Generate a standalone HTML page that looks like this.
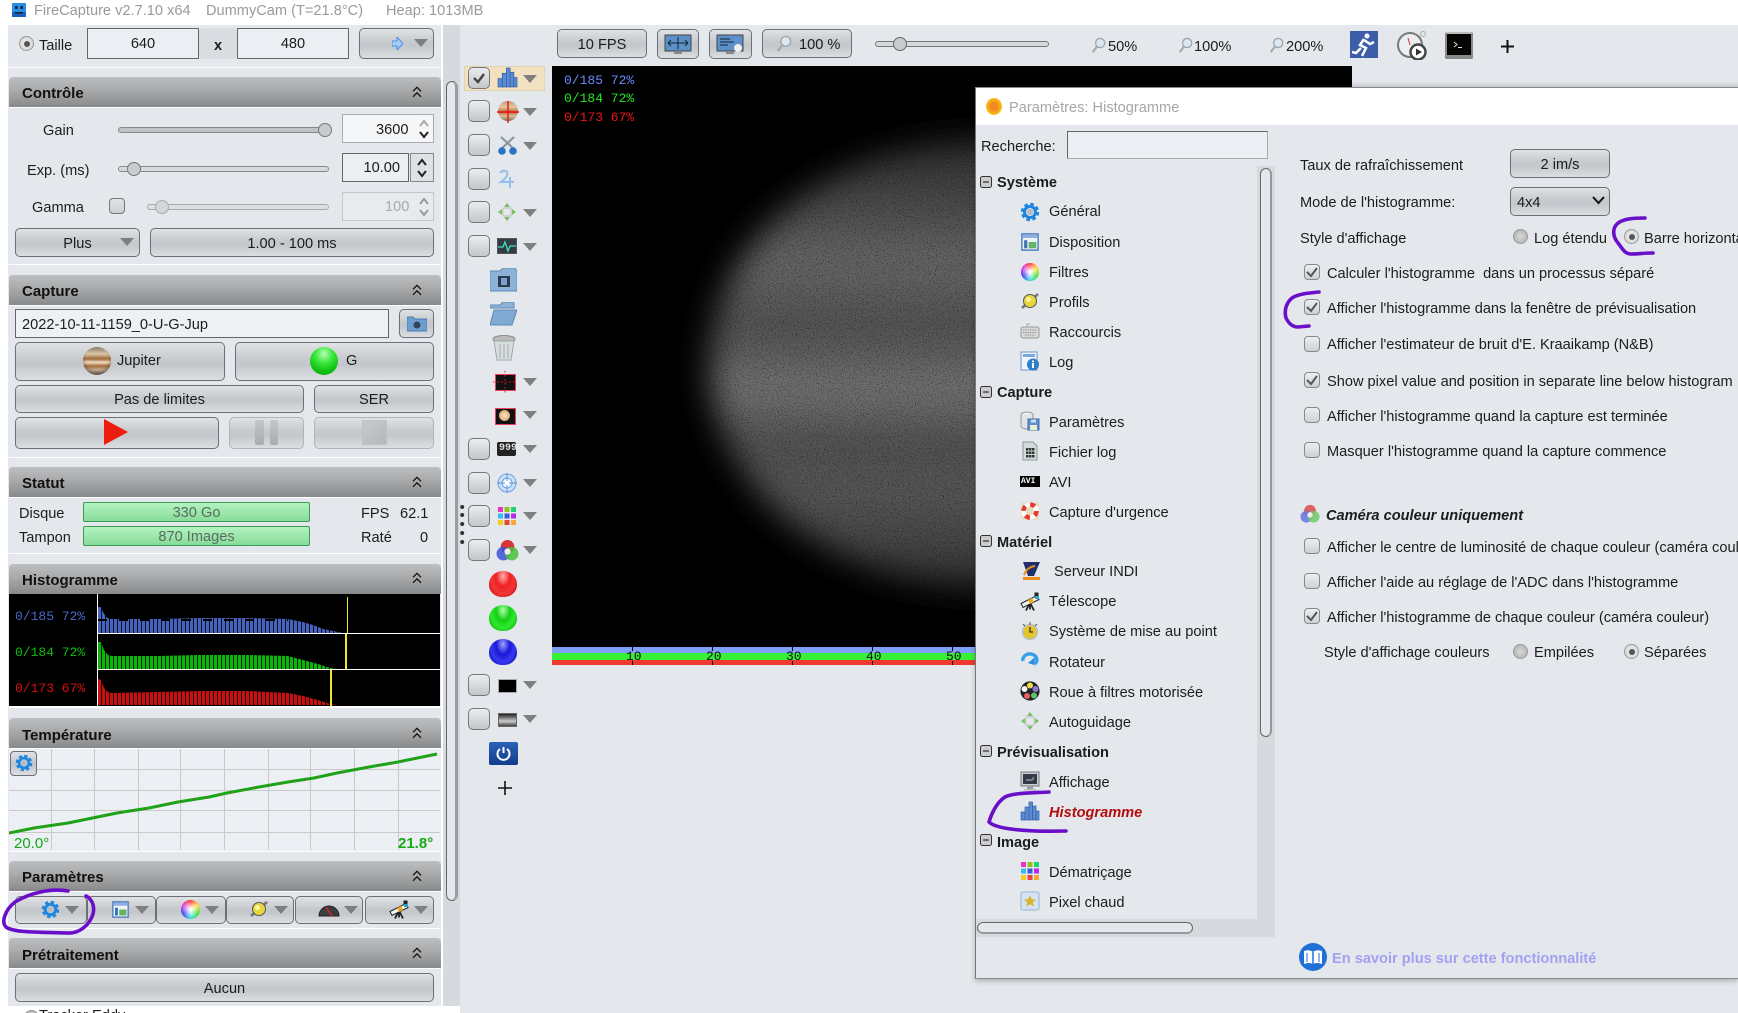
<!DOCTYPE html>
<html lang="fr"><head><meta charset="utf-8"><title>FireCapture</title>
<style>
html,body{margin:0;padding:0;background:#fff}
#p{position:relative;width:1738px;height:1013px;overflow:hidden;background:#fff;font:14.6px/18px "Liberation Sans",sans-serif;color:#1c1c1c}
#p div,#p span,#p svg{position:absolute}
#p span{white-space:nowrap;margin-top:1px}
.b{background:linear-gradient(#e0e2e5,#c6c9cd 45%,#c4c7cb 60%,#dcdfe2);border:1px solid #6c7076;border-radius:5px;box-sizing:border-box;text-align:center;padding-top:2px}
.d{border-color:#b0b4b8}
.i{background:#ebeff3;border:1px solid #666;box-sizing:border-box;text-align:center;padding-top:1px}
.h{left:9px;width:432px;height:30px;background:linear-gradient(#bcbec0,#aaacae 40%,#88898a);border-radius:4px 4px 0 0;border-bottom:1px solid #fff;box-sizing:content-box}
.h b{position:absolute;left:13px;top:8px;font-size:15px;color:#111}
.pn{left:9px;width:432px;background:#e4e8ec;border-bottom:1px solid #fff}
.ar{width:0;height:0;border-left:7px solid transparent;border-right:7px solid transparent;border-top:8px solid #7f7f7f}
.cb{width:22px;height:22px;left:468px;border:1px solid #777;border-radius:5px;background:linear-gradient(#eaecee,#c4c7ca);box-sizing:border-box}
.ck{width:16px;height:16px;left:1304px;border:1px solid #888;border-radius:4px;background:linear-gradient(#eceef0,#ced1d4);box-sizing:border-box}
.r{width:15px;height:15px;border-radius:50%;border:1px solid #999;background:radial-gradient(#d8d8d8,#adadad);box-sizing:border-box}
.r.on{background:radial-gradient(#f0f0f0,#d0d0d0)}
.r.on::after{content:"";position:absolute;left:3.5px;top:3.5px;width:6px;height:6px;border-radius:50%;background:#555}
.wh{border-radius:50%;background:radial-gradient(#fff 5%,transparent 70%),conic-gradient(#f33,#fd3,#3d3,#3dd,#33f,#d3d,#f33)}
.ball{width:28px;height:28px;border-radius:50%}
.gb{background:linear-gradient(#b2f3c0,#86dc99);border:1px solid #3d9a55;border-radius:2px;box-sizing:border-box;text-align:center;color:#5b6b60;height:20px;left:83px;width:227px;padding-top:1px}
.tk{background:linear-gradient(#000 4px,transparent 4px 14px,#000 14px);width:1px;top:647px;height:18px}
.gr{background:#c9c9c9}
.m{font:13px/18px "Liberation Mono",monospace}
</style></head><body><div id="p">

<svg width="0" height="0" style="position:absolute">
<defs>
<symbol id="gear" viewBox="0 0 20 20"><circle cx="10" cy="10" r="7.5" fill="none" stroke="#1c86e2" stroke-width="3.4" stroke-dasharray="3.4 2.5"/><circle cx="10" cy="10" r="5.5" fill="none" stroke="#1c86e2" stroke-width="3"/><circle cx="10" cy="10" r="3.2" fill="#b9bdc2"/></symbol>
<symbol id="lay" viewBox="0 0 20 20"><rect x="1" y="1" width="18" height="18" fill="#eef3fa" stroke="#4d7cc0" stroke-width="1.6"/><rect x="2" y="2" width="16" height="3.5" fill="#8db0e0"/><rect x="3.5" y="8" width="3.5" height="9" fill="#3d70b8"/><rect x="8.5" y="10" width="8.5" height="7" fill="#63b563"/></symbol>
<symbol id="plan" viewBox="0 0 20 20"><path d="M2 17L18 3" stroke="#777" stroke-width="2.6"/><circle cx="10" cy="10" r="6.5" fill="#e6d640" stroke="#555" stroke-width="1"/><circle cx="8.5" cy="8.5" r="2.5" fill="#fdf59a"/></symbol>
<symbol id="tele" viewBox="0 0 20 20"><path d="M10 11L6 19M10 11L14 19M10 11V18" stroke="#222" stroke-width="1.8" fill="none"/><path d="M1 12L17 4L19 8L3 16Z" fill="#f2f2f2" stroke="#222" stroke-width="1"/><path d="M8 8.5L12 6.5L14 10.5L10 12.5Z" fill="#eda91f"/><rect x="14.5" y="1" width="4" height="4" fill="#222"/><rect x="15" y="4.5" width="4" height="3" fill="#2aa5c8"/></symbol>
<symbol id="gauge" viewBox="0 0 22 16"><path d="M1 14A10 10 0 0 1 21 14Z" fill="#3a3d42" stroke="#222"/><path d="M8 5L14 14" stroke="#d22" stroke-width="1.5"/></symbol>
<symbol id="hist" viewBox="0 0 20 20"><g fill="#5c8bd6" stroke="#365f9f" stroke-width=".7"><rect x="1" y="11" width="4" height="8"/><rect x="5" y="6" width="4" height="13"/><rect x="9" y="1" width="3.5" height="18"/><rect x="12.5" y="5" width="3.5" height="14"/><rect x="16" y="10" width="3" height="9"/></g></symbol>
<symbol id="kb" viewBox="0 0 20 20"><rect x="1" y="6" width="18" height="11" rx="2" fill="#d8d8d8" stroke="#999"/><path d="M3 9H17M3 11.5H17M5 14H15" stroke="#999" stroke-dasharray="1.5 .8"/><path d="M7 6V3H10" stroke="#aaa" fill="none"/></symbol>
<symbol id="log" viewBox="0 0 20 20"><rect x="1" y="1" width="16" height="18" fill="#eef4fb" stroke="#6d94c8"/><rect x="3" y="3" width="12" height="3" fill="#7da7dc"/><circle cx="13" cy="13.5" r="6" fill="#2f7fc4"/><rect x="12" y="12" width="2" height="5" fill="#fff"/><rect x="12" y="9.5" width="2" height="1.7" fill="#fff"/></symbol>
<symbol id="par" viewBox="0 0 20 20"><ellipse cx="7" cy="4" rx="6" ry="3" fill="#eee" stroke="#999"/><path d="M1 4V15A6 3 0 0 0 13 15V4" fill="#e4e4e4" stroke="#999"/><rect x="8" y="8" width="11" height="11" fill="#5f8fd0" stroke="#3c6cad"/><rect x="10" y="14" width="7" height="5" fill="#e8f0d0"/><rect x="11" y="8.5" width="5" height="3" fill="#cfe0f5"/></symbol>
<symbol id="fil" viewBox="0 0 20 20"><path d="M3 1H13L17 5V19H3Z" fill="#cfdcd8" stroke="#8a9a9a"/><g fill="#333"><rect x="6" y="7" width="2.5" height="2.5"/><rect x="9" y="7" width="2.5" height="2.5"/><rect x="12" y="7" width="2.5" height="2.5"/><rect x="6" y="10.5" width="2.5" height="2.5"/><rect x="9" y="10.5" width="2.5" height="2.5"/><rect x="12" y="10.5" width="2.5" height="2.5"/><rect x="6" y="14" width="2.5" height="2.5"/><rect x="9" y="14" width="2.5" height="2.5"/><rect x="12" y="14" width="2.5" height="2.5"/></g></symbol>
<symbol id="buoy" viewBox="0 0 20 20"><rect x="1" y="1" width="18" height="18" rx="3" fill="#e6dcc0"/><circle cx="10" cy="10" r="6.5" fill="none" stroke="#fff" stroke-width="4.5"/><circle cx="10" cy="10" r="6.5" fill="none" stroke="#e43a35" stroke-width="4.5" stroke-dasharray="5 5.2"/></symbol>
<symbol id="indi" viewBox="0 0 20 20"><path d="M2 1H19L13 15H7Z" fill="#1f2f6e"/><path d="M3 14Q6 6 14 5" stroke="#ee8e16" stroke-width="2" fill="none"/><rect x="2" y="16" width="17" height="3" fill="#ee8e16"/></symbol>
<symbol id="foc" viewBox="0 0 20 20"><circle cx="10" cy="11" r="7.5" fill="#e5c52c" stroke="#b5c2d3" stroke-width="1.5"/><path d="M10 6V11H13" stroke="#333" fill="none" stroke-width="1.3"/><path d="M10 1V4M3 3L5 5M17 3L15 5" stroke="#555"/></symbol>
<symbol id="rot" viewBox="0 0 20 20"><path d="M3 10A7 6 0 1 1 15 13" fill="none" stroke="#36a0ea" stroke-width="3.4"/><path d="M15 6L8 12L14 14L14 19Z" fill="#2a8fdc"/></symbol>
<symbol id="rou" viewBox="0 0 20 20"><circle cx="10" cy="10" r="9.6" fill="#222"/><circle cx="10" cy="4.5" r="3" fill="#e9db4c"/><circle cx="15.5" cy="8" r="3" fill="#8a7ad0"/><circle cx="14" cy="14.5" r="3" fill="#5ec46a"/><circle cx="7" cy="15" r="3" fill="#e9616a"/><circle cx="4.5" cy="8" r="3" fill="#f4f4f4"/></symbol>
<symbol id="auto" viewBox="0 0 20 20"><rect x="6" y="6" width="8" height="8" fill="#e8eaea" stroke="#bbb"/><g fill="#78c060"><path d="M10 1L13 5H7Z"/><path d="M10 19L13 15H7Z"/><path d="M1 10L5 7V13Z"/><path d="M19 10L15 7V13Z"/></g></symbol>
<symbol id="mon" viewBox="0 0 20 20"><rect x="1" y="1" width="18" height="14" fill="#c9ced4" stroke="#777"/><rect x="3" y="3" width="14" height="10" fill="#353a48"/><path d="M6 9H12Q14 8 13 6" stroke="#bbb" fill="none"/><rect x="7" y="15" width="6" height="3" fill="#9a9ea4"/><rect x="4" y="18" width="12" height="1.5" fill="#bbb"/></symbol>
<symbol id="dem" viewBox="0 0 20 20"><g><rect x="1" y="1" width="5" height="5" fill="#e934c8"/><rect x="7.5" y="1" width="5" height="5" fill="#8dc418"/><rect x="14" y="1" width="5" height="5" fill="#1dd272"/><rect x="1" y="7.5" width="5" height="5" fill="#38bdf2"/><rect x="7.5" y="7.5" width="5" height="5" fill="#3a5ae0"/><rect x="14" y="7.5" width="5" height="5" fill="#b52be8"/><rect x="1" y="14" width="5" height="5" fill="#f2cf25"/><rect x="7.5" y="14" width="5" height="5" fill="#e6483a"/><rect x="14" y="14" width="5" height="5" fill="#f7a93a"/></g></symbol>
<symbol id="star" viewBox="0 0 20 20"><rect x="1" y="1" width="18" height="18" rx="2" fill="#d4e4f4" stroke="#9ab5d2"/><path d="M10 4L11.8 8.3L16.2 8.5L12.8 11.3L14 15.8L10 13.3L6 15.8L7.2 11.3L3.8 8.5L8.2 8.3Z" fill="#d8b52e"/></symbol>
<symbol id="chev" viewBox="0 0 10 12"><path d="M1 5.3L5 1.3L9 5.3M1 10.8L5 6.8L9 10.8" fill="none" stroke="#111" stroke-width="1.3"/></symbol>
<symbol id="mag" viewBox="0 0 18 20"><circle cx="11" cy="7" r="5.5" fill="#dbe8f2" stroke="#a0a5aa" stroke-width="1.6"/><path d="M7 11.5L2 18" stroke="#a8a8a8" stroke-width="2.6"/></symbol>
<symbol id="rgb" viewBox="0 0 22 22"><circle cx="11" cy="7.5" r="6.5" fill="#d83636"/><circle cx="7" cy="14" r="6.5" fill="#3d4fd8" fill-opacity=".85"/><circle cx="15" cy="14" r="6.5" fill="#4cc03d" fill-opacity=".85"/><circle cx="11" cy="12" r="3" fill="#eee"/></symbol>
</defs></svg>

<!-- title bar -->
<svg style="left:12px;top:3px" width="14" height="14" viewBox="0 0 14 14"><rect width="14" height="14" fill="#2a8fe0"/><rect y="9" width="14" height="5" fill="#1e5fbe"/><rect x="3" y="3" width="2.5" height="3" fill="#124"/><rect x="8.5" y="3" width="2.5" height="3" fill="#124"/><rect x="3" y="9" width="8" height="1.6" fill="#124"/></svg>
<span style="left:34px;top:1px;color:#9a9a9a">FireCapture v2.7.10 x64</span>
<span style="left:206px;top:1px;color:#9a9a9a">DummyCam (T=21.8°C)</span>
<span style="left:386px;top:1px;color:#9a9a9a">Heap: 1013MB</span>

<!-- main backgrounds -->
<div style="left:460px;top:25px;width:1278px;height:988px;background:#e4e8ec"></div>
<div style="left:8px;top:25px;width:452px;height:981px;background:#e4e8ec"></div>
<div style="left:443px;top:25px;width:17px;height:981px;background:#d6dade"></div>
<div style="left:446px;top:81px;width:12px;height:820px;border:1px solid #666;border-radius:6px;box-sizing:border-box;background:#e4e8ec;border-right:3px solid #9a9ea4"></div>
<div style="left:441px;top:25px;width:2px;height:981px;background:#fff"></div>

<!-- Taille -->
<div style="left:8px;top:25px;width:433px;height:42px;border-bottom:1px solid #fff"></div>
<div class="r on" style="left:19px;top:36px"></div>
<span style="left:39px;top:36px">Taille</span>
<div class="i" style="left:87px;top:28px;width:112px;height:31px;line-height:29px">640</div>
<div style="left:199px;top:28px;width:38px;height:31px;background:#d9dce0;border-radius:4px"></div>
<span style="left:214px;top:36px;font-weight:bold">x</span>
<div class="i" style="left:237px;top:28px;width:112px;height:31px;line-height:29px">480</div>
<div class="b" style="left:359px;top:28px;width:75px;height:31px"></div>
<svg style="left:392px;top:37px" width="11" height="13" viewBox="0 0 11 13"><path d="M0 4H5V0L11 6.5L5 13V9H0Z" fill="#a8cdf5" stroke="#4b8fde"/></svg>
<div class="ar" style="left:414px;top:39px"></div>

<!-- Contrôle -->
<div class="h" style="top:77px"><b>Contrôle</b></div><svg style="left:412px;top:86px" width="10" height="12"><use href="#chev"/></svg>
<div class="pn" style="top:108px;height:156px"></div>
<span style="left:43px;top:121px">Gain</span>
<div style="left:118px;top:127px;width:213px;height:6px;background:#bfc3c7;border:1px solid #888;border-radius:3px;box-sizing:border-box"></div>
<div style="left:318px;top:123px;width:14px;height:14px;border-radius:50%;background:#c8ccd0;border:1px solid #777;box-sizing:border-box"></div>
<div style="left:342px;top:114px;width:92px;height:29px;background:#f4f6f8;border:1px solid #aaa;box-sizing:border-box"></div>
<span style="left:376px;top:120px">3600</span>
<svg style="left:418px;top:118px" width="12" height="22" viewBox="0 0 12 22"><path d="M2 8L6 3L10 8" stroke="#aaa" stroke-width="2" fill="none"/><path d="M2 14L6 19L10 14" stroke="#222" stroke-width="2" fill="none"/></svg>

<span style="left:27px;top:161px">Exp. (ms)</span>
<div style="left:118px;top:166px;width:211px;height:6px;background:#d6d9dc;border:1px solid #888;border-radius:3px;box-sizing:border-box"></div>
<div style="left:127px;top:162px;width:14px;height:14px;border-radius:50%;background:#c8ccd0;border:1px solid #777;box-sizing:border-box"></div>
<div class="i" style="left:342px;top:153px;width:67px;height:29px;text-align:right;padding-right:8px;line-height:27px">10.00</div>
<div style="left:410px;top:153px;width:24px;height:29px;background:#dfe2e5;border:1px solid #888;box-sizing:border-box"></div>
<svg style="left:416px;top:157px" width="12" height="22" viewBox="0 0 12 22"><path d="M2 8L6 3L10 8M2 14L6 19L10 14" stroke="#222" stroke-width="2" fill="none"/></svg>

<span style="left:32px;top:198px">Gamma</span>
<div style="left:109px;top:198px;width:16px;height:16px;border:1px solid #777;border-radius:4px;background:linear-gradient(#e2e4e6,#ccd0d3);box-sizing:border-box"></div>
<div style="left:147px;top:204px;width:182px;height:6px;background:#dde0e3;border:1px solid #aaa;border-radius:3px;box-sizing:border-box"></div>
<div style="left:155px;top:200px;width:14px;height:14px;border-radius:50%;background:#d4d7da;border:1px solid #aaa;box-sizing:border-box"></div>
<div style="left:342px;top:192px;width:92px;height:29px;background:#e8ebee;border:1px solid #c4c7ca;box-sizing:border-box"></div>
<span style="left:385px;top:197px;color:#aaa">100</span>
<svg style="left:418px;top:196px" width="12" height="22" viewBox="0 0 12 22"><path d="M2 8L6 3L10 8M2 14L6 19L10 14" stroke="#999" stroke-width="2" fill="none"/></svg>

<div class="b" style="left:15px;top:228px;width:125px;height:29px;line-height:27px">Plus</div>
<div class="ar" style="left:120px;top:238px"></div>
<div class="b" style="left:150px;top:228px;width:284px;height:29px;line-height:27px">1.00 - 100 ms</div>

<!-- Capture -->
<div class="h" style="top:275px"><b>Capture</b></div><svg style="left:412px;top:284px" width="10" height="12"><use href="#chev"/></svg>
<div class="pn" style="top:306px;height:151px"></div>
<div class="i" style="left:15px;top:309px;width:374px;height:29px;text-align:left;padding:2px 0 0 6px;line-height:27px;background:#eef1f4">2022-10-11-1159_0-U-G-Jup</div>
<div class="b" style="left:399px;top:309px;width:35px;height:29px"></div>
<svg style="left:407px;top:314px" width="20" height="18" viewBox="0 0 20 18"><path d="M0 3H6L8 5H20V17H0Z" fill="#6c9ed0" stroke="#4a7db0"/><circle cx="10" cy="11" r="3.5" fill="#345" /></svg>

<div class="b" style="left:15px;top:342px;width:210px;height:39px"></div>
<div class="ball" style="left:83px;top:347px;background:radial-gradient(circle at 50% 40%,transparent 50%,rgba(60,40,30,.8) 100%),linear-gradient(#8a7a68,#dcc6a6 25%,#a06a3a 42%,#f0dcc0 55%,#a56c3c 68%,#c7b49c 82%,#6f6254)"></div>
<span style="left:117px;top:351px">Jupiter</span>
<div class="b" style="left:235px;top:342px;width:199px;height:39px"></div>
<div class="ball" style="left:310px;top:347px;background:radial-gradient(circle at 50% 25%,#b8ffb8 0,#3ce83c 35%,#0fc00f 70%,#0a9a0a)"></div>
<span style="left:346px;top:351px">G</span>

<div class="b" style="left:15px;top:385px;width:289px;height:28px;line-height:26px;padding-top:1px">Pas de limites</div>
<div class="b" style="left:314px;top:385px;width:120px;height:28px;line-height:26px;padding-top:1px">SER</div>

<div class="b" style="left:15px;top:417px;width:204px;height:32px"></div>
<svg style="left:104px;top:419px" width="24" height="26"><path d="M0 0L24 13L0 26Z" fill="#ee1c0e"/></svg>
<div class="b d" style="left:229px;top:417px;width:75px;height:32px"></div>
<div style="left:255px;top:420px;width:9px;height:25px;background:linear-gradient(#c2c5c9,#a9acb0);border-radius:2px"></div>
<div style="left:270px;top:420px;width:8px;height:25px;background:linear-gradient(#c2c5c9,#a9acb0);border-radius:2px"></div>
<div class="b d" style="left:314px;top:417px;width:120px;height:32px"></div>
<div style="left:362px;top:420px;width:25px;height:25px;background:linear-gradient(135deg,#c8cbce,#b4b7bb);border:1px solid #c0c3c6;box-sizing:border-box"></div>

<!-- Statut -->
<div class="h" style="top:467px"><b>Statut</b></div><svg style="left:412px;top:476px" width="10" height="12"><use href="#chev"/></svg>
<div class="pn" style="top:498px;height:55px"></div>
<span style="left:19px;top:504px">Disque</span>
<div class="gb" style="top:502px;line-height:18px">330 Go</div>
<span style="left:19px;top:528px">Tampon</span>
<div class="gb" style="top:526px;line-height:19px">870 Images</div>
<span style="left:361px;top:504px">FPS</span><span style="left:400px;top:504px">62.1</span>
<span style="left:361px;top:528px">Raté</span><span style="left:420px;top:528px">0</span>

<!-- Histogramme -->
<div class="h" style="top:564px"><b>Histogramme</b></div><svg style="left:412px;top:572px" width="10" height="12"><use href="#chev"/></svg>
<div style="left:9px;top:594px;width:431px;height:112px;background:#000"></div>
<div style="left:9px;top:706px;width:432px;height:2px;background:#fff"></div>
<div style="left:97px;top:594px;width:1px;height:112px;background:#fff"></div>
<div style="left:98px;top:633px;width:342px;height:1px;background:#fff"></div>
<div style="left:98px;top:669px;width:342px;height:1px;background:#fff"></div>
<span class="m" style="left:15px;top:607px;color:#4a67c8">0/185 72%</span>
<span class="m" style="left:15px;top:643px;color:#0cc00c">0/184 72%</span>
<span class="m" style="left:15px;top:679px;color:#d81010">0/173 67%</span>
<div style="left:98px;top:597px;width:245px;height:36px;background:repeating-linear-gradient(90deg,#4664bd 0 3px,#0a0f24 3px 4px);clip-path:polygon(0 36px,0 10px,3px 10px,5px 15px,8px 20px,12px 22px,60px 22px,100px 21px,150px 21px,190px 22px,205px 25px,215px 28px,225px 32px,240px 35px,245px 36px)"></div>
<div style="left:98px;top:619px;width:190px;height:2px;background:repeating-linear-gradient(90deg,#000 0 9px,transparent 9px 21px)"></div>
<div style="left:98px;top:634px;width:245px;height:35px;background:repeating-linear-gradient(90deg,#0cb40c 0 3px,#022002 3px 4px);clip-path:polygon(0 35px,0 8px,3px 8px,6px 16px,10px 21px,14px 22px,60px 22px,100px 21px,150px 21px,190px 22px,205px 26px,220px 30px,232px 34px,240px 35px)"></div>
<div style="left:98px;top:670px;width:245px;height:35px;background:repeating-linear-gradient(90deg,#c81010 0 3px,#200202 3px 4px);clip-path:polygon(0 35px,0 9px,3px 10px,6px 18px,10px 22px,14px 23px,60px 22px,100px 21px,150px 21px,190px 23px,205px 26px,220px 30px,232px 34px,240px 35px)"></div>
<div style="left:347px;top:597px;width:1px;height:36px;background:#f0e820"></div>
<div style="left:345px;top:634px;width:2px;height:35px;background:#f0e820"></div>
<div style="left:330px;top:670px;width:2px;height:36px;background:#f0e820"></div>

<!-- Température -->
<div class="h" style="top:718px"><b style="top:9px">Température</b></div><svg style="left:412px;top:727px" width="10" height="12"><use href="#chev"/></svg>
<div class="pn" style="top:749px;height:102px;background:#ecf0f4"></div>
<div class="gr" style="left:51px;top:749px;width:1px;height:101px"></div><div class="gr" style="left:94px;top:749px;width:1px;height:101px"></div><div class="gr" style="left:138px;top:749px;width:1px;height:101px"></div><div class="gr" style="left:180px;top:749px;width:1px;height:101px"></div><div class="gr" style="left:224px;top:749px;width:1px;height:101px"></div><div class="gr" style="left:268px;top:749px;width:1px;height:101px"></div><div class="gr" style="left:310px;top:749px;width:1px;height:101px"></div><div class="gr" style="left:354px;top:749px;width:1px;height:101px"></div><div class="gr" style="left:398px;top:749px;width:1px;height:101px"></div>
<div class="gr" style="left:9px;top:769px;width:431px;height:1px"></div><div class="gr" style="left:9px;top:790px;width:431px;height:1px"></div><div class="gr" style="left:9px;top:810px;width:431px;height:1px"></div><div class="gr" style="left:9px;top:832px;width:431px;height:1px"></div>
<svg style="left:9px;top:749px" width="432" height="90"><path d="M0 84L25 79L59 74L108 64L140 59L169 53L200 48L218 44L250 38L279 33L305 29L328 24L360 18L389 13L428 5" fill="none" stroke="#16a816" stroke-width="3"/><path d="M0 84L25 79L59 74L108 64L140 59L169 53L200 48L218 44L250 38L279 33L305 29L328 24L360 18L389 13L428 5" fill="none" stroke="#8a5a2a" stroke-width="2" stroke-dasharray="1.5 11"/></svg>
<div class="b" style="left:10px;top:751px;width:27px;height:25px;border-radius:4px"></div>
<svg style="left:15px;top:754px" width="18" height="18"><use href="#gear"/></svg>
<span style="left:14px;top:834px;color:#16a816;font-size:15px">20.0°</span>
<span style="left:398px;top:834px;color:#16a816;font-size:15px;font-weight:bold">21.8°</span>

<!-- Paramètres -->
<div class="h" style="top:861px"><b>Paramètres</b></div><svg style="left:412px;top:870px" width="10" height="12"><use href="#chev"/></svg>
<div class="pn" style="top:892px;height:36px"></div>
<div class="b" style="left:15px;top:896px;width:72px;height:28px"></div>
<div class="b" style="left:87px;top:896px;width:69px;height:28px"></div>
<div class="b" style="left:156px;top:896px;width:70px;height:28px"></div>
<div class="b" style="left:226px;top:896px;width:68px;height:28px"></div>
<div class="b" style="left:295px;top:896px;width:68px;height:28px"></div>
<div class="b" style="left:365px;top:896px;width:69px;height:28px"></div>
<svg style="left:41px;top:900px" width="19" height="19"><use href="#gear"/></svg><div class="ar" style="left:65px;top:906px"></div>
<svg style="left:111px;top:901px" width="19" height="17"><use href="#lay"/></svg><div class="ar" style="left:135px;top:906px"></div>
<div class="wh" style="left:181px;top:900px;width:19px;height:19px"></div><div class="ar" style="left:205px;top:906px"></div>
<svg style="left:249px;top:899px" width="20" height="20"><use href="#plan"/></svg><div class="ar" style="left:274px;top:906px"></div>
<svg style="left:318px;top:902px" width="22" height="16"><use href="#gauge"/></svg><div class="ar" style="left:344px;top:906px"></div>
<svg style="left:389px;top:899px" width="20" height="21"><use href="#tele"/></svg><div class="ar" style="left:414px;top:906px"></div>

<!-- Prétraitement -->
<div class="h" style="top:938px"><b style="top:9px">Prétraitement</b></div><svg style="left:412px;top:947px" width="10" height="12"><use href="#chev"/></svg>
<div class="pn" style="top:969px;height:37px"></div>
<div class="b" style="left:15px;top:973px;width:419px;height:29px;line-height:27px">Aucun</div>
<div style="left:0;top:1006px;width:460px;height:7px;background:#fff"></div>
<div class="r" style="left:24px;top:1010px"></div>
<span style="left:39px;top:1006px">Tracker Eddy</span>

<!-- Toolbar -->
<div class="b" style="left:557px;top:29px;width:90px;height:29px;line-height:27px">10 FPS</div>
<div class="b" style="left:657px;top:29px;width:42px;height:30px"></div>
<svg style="left:664px;top:34px" width="28" height="21" viewBox="0 0 28 21"><rect x="1" y="1" width="26" height="16" fill="#5d90c8" stroke="#444"/><path d="M4 9H24M14 3V15M4 9l3-3M4 9l3 3M24 9l-3-3M24 9l-3 3" stroke="#123" fill="none"/><rect x="10" y="17" width="8" height="3" fill="#888"/></svg>
<div class="b" style="left:709px;top:29px;width:43px;height:30px"></div>
<svg style="left:716px;top:34px" width="28" height="21" viewBox="0 0 28 21"><rect x="1" y="1" width="26" height="16" fill="#5d90c8" stroke="#444"/><path d="M4 5H14M4 8H18M4 11H12" stroke="#123"/><circle cx="22" cy="14" r="4" fill="#eee"/><rect x="10" y="17" width="8" height="3" fill="#888"/></svg>
<div class="b" style="left:762px;top:29px;width:90px;height:29px"></div>
<svg style="left:776px;top:35px" width="16" height="18"><use href="#mag"/></svg>
<span style="left:799px;top:35px">100 %</span>
<div style="left:875px;top:41px;width:174px;height:6px;background:#d6d9dc;border:1px solid #777;border-radius:3px;box-sizing:border-box"></div>
<div style="left:893px;top:37px;width:14px;height:14px;border-radius:50%;background:#c8ccd0;border:1px solid #666;box-sizing:border-box"></div>
<svg style="left:1091px;top:37px" width="15" height="17"><use href="#mag"/></svg><span style="left:1108px;top:37px">50%</span>
<svg style="left:1178px;top:37px" width="15" height="17"><use href="#mag"/></svg><span style="left:1194px;top:37px">100%</span>
<svg style="left:1269px;top:37px" width="15" height="17"><use href="#mag"/></svg><span style="left:1286px;top:37px">200%</span>
<svg style="left:1350px;top:31px" width="28" height="27" viewBox="0 0 28 27"><rect width="28" height="27" fill="#3c5ea8"/><circle cx="17" cy="5" r="2.5" fill="#fff"/><path d="M14 8L10 14L16 17L12 25M14 9L20 13L24 11M11 17L6 22L2 21" stroke="#fff" stroke-width="2.5" fill="none"/></svg>
<svg style="left:1397px;top:30px" width="30" height="30" viewBox="0 0 30 30"><circle cx="13" cy="15" r="12" fill="#eceff0" stroke="#777" stroke-width="2"/><path d="M13 15L11 8" stroke="#c33"/><circle cx="21" cy="22" r="7.5" fill="#fff" stroke="#444" stroke-width="2.5"/><path d="M19 18.5L25 22L19 25.5Z" fill="#333"/><circle cx="26" cy="4" r="2.5" fill="none" stroke="#aaa"/></svg>
<div style="left:1445px;top:32px;width:28px;height:27px;background:#050505;border:2px solid #888;border-top-color:#bbb;border-bottom-width:4px;box-sizing:border-box;border-radius:2px"></div>
<svg style="left:1453px;top:41px" width="10" height="8"><path d="M1 1L4 3.5L1 6M5 6.5H9" stroke="#ddd" fill="none"/></svg>
<svg style="left:1501px;top:40px" width="13" height="13"><path d="M6.5 0V13M0 6.5H13" stroke="#111" stroke-width="2"/></svg>

<!-- left vertical toolbar -->
<div style="left:464px;top:66px;width:81px;height:25px;background:#f2e2bf;border:1px solid #e2d4b3;box-sizing:border-box"></div>
<div class="cb" style="top:67px"></div>
<svg style="left:472px;top:71px" width="14" height="14" viewBox="0 0 14 14"><path d="M2 7L6 11L12 3" stroke="#444" stroke-width="2.4" fill="none"/></svg>
<svg style="left:497px;top:67px" width="21" height="21"><use href="#hist"/></svg>
<div class="ar" style="left:523px;top:75px"></div>

<div class="cb" style="top:100px"></div>
<div style="left:498px;top:101px;width:20px;height:20px;border-radius:50%;background:linear-gradient(#b89a80,#e8c8a0 30%,#b06a3a 55%,#ddc0a0 75%,#7a6a58)"></div>
<svg style="left:497px;top:101px" width="22" height="22"><path d="M0 11H22M11 0V22" stroke="#f01010" stroke-width="1.4"/></svg>
<div class="ar" style="left:523px;top:108px"></div>

<div class="cb" style="top:134px"></div>
<svg style="left:497px;top:135px" width="21" height="21" viewBox="0 0 21 21"><path d="M4 2L17 14M17 2L4 14" stroke="#8a97a3" stroke-width="2.2"/><circle cx="5" cy="16" r="3.8" fill="#2a72c6"/><circle cx="16" cy="16" r="3.8" fill="#2a72c6"/></svg>
<div class="ar" style="left:523px;top:142px"></div>

<div class="cb" style="top:168px"></div>
<svg style="left:498px;top:169px" width="18" height="20" viewBox="0 0 18 20"><path d="M2 4Q6 0 9 3Q11 7 3 13H16M12 8V19" fill="none" stroke="#93c0ee" stroke-width="2"/></svg>

<div class="cb" style="top:201px"></div>
<svg style="left:497px;top:202px" width="20" height="20"><use href="#auto"/></svg>
<div class="ar" style="left:523px;top:209px"></div>

<div class="cb" style="top:235px"></div>
<div style="left:497px;top:238px;width:20px;height:16px;background:#333c44;border:1px solid #555;box-sizing:border-box"></div>
<svg style="left:497px;top:238px" width="20" height="16"><path d="M1 9H6L8 4L11 13L13 8H19" stroke="#3fe0c0" fill="none" stroke-width="1.3"/></svg>
<div class="ar" style="left:523px;top:243px"></div>

<svg style="left:490px;top:268px" width="27" height="24" viewBox="0 0 27 24"><path d="M0 3H10L13 0H25L27 3V23H0Z" fill="#8db2d8" stroke="#5f8ab5"/><rect x="8" y="8" width="12" height="11" fill="#2b3a48"/><rect x="11" y="10" width="6" height="7" fill="#7c9fd6"/></svg>
<svg style="left:490px;top:302px" width="27" height="24" viewBox="0 0 27 24"><path d="M0 3H10L13 0H24V6H0Z" fill="#8db2d8" stroke="#5f8ab5"/><path d="M4 8H27L22 23H0Z" fill="#80aad2" stroke="#5f8ab5"/></svg>
<svg style="left:492px;top:335px" width="24" height="26" viewBox="0 0 24 26"><ellipse cx="12" cy="4" rx="11" ry="3.5" fill="#bbb" stroke="#888"/><path d="M2 6L5 25H19L22 6Z" fill="#d9dde0" stroke="#9aa"/><path d="M8 9V23M12 9V23M16 9V23" stroke="#a4a9ae"/></svg>
<div style="left:495px;top:374px;width:19px;height:15px;background:#111;border:1px solid #f04060;box-sizing:content-box"></div>
<svg style="left:493px;top:371px" width="24" height="23"><path d="M12 0V23M0 11H24" stroke="#f01a1a" stroke-dasharray="1.5 2.5"/></svg>
<div class="ar" style="left:523px;top:378px"></div>
<div style="left:495px;top:408px;width:19px;height:15px;background:#111;border:1px solid #f04060;box-sizing:content-box"></div>
<div style="left:499px;top:410px;width:11px;height:11px;border-radius:50%;background:radial-gradient(#fbe9c8,#d08a55)"></div>
<div class="ar" style="left:523px;top:411px"></div>

<div class="cb" style="top:438px"></div>
<div style="left:497px;top:442px;width:19px;height:14px;background:#222;border-radius:2px"></div>
<span style="left:499px;top:440px;font:bold 10px/16px 'Liberation Mono',monospace;color:#ddd">999</span>
<div class="ar" style="left:523px;top:445px"></div>

<div class="cb" style="top:472px"></div>
<svg style="left:497px;top:473px" width="20" height="20" viewBox="0 0 20 20"><circle cx="10" cy="10" r="9" fill="#cfe0f6" stroke="#6da0e0"/><circle cx="10" cy="10" r="5" fill="#eef5ff" stroke="#6da0e0"/><path d="M10 0V20M0 10H20" stroke="#5a90d8"/><circle cx="10" cy="10" r="2.2" fill="#fff"/></svg>
<div class="ar" style="left:523px;top:479px"></div>

<div class="cb" style="top:505px"></div>
<svg style="left:497px;top:506px" width="20" height="20"><use href="#dem"/></svg>
<div class="ar" style="left:523px;top:512px"></div>

<div class="cb" style="top:539px"></div>
<svg style="left:496px;top:539px" width="23" height="23"><use href="#rgb"/></svg>
<div class="ar" style="left:523px;top:546px"></div>

<div class="ball" style="left:489px;top:571px;height:26px;background:radial-gradient(ellipse at 50% 20%,#ffb0b0 0,#f02020 35%,#f03838 60%,#c00000 100%);border-radius:50% 50% 46% 46%"></div>
<div class="ball" style="left:489px;top:605px;height:26px;background:radial-gradient(ellipse at 50% 20%,#b0ffb0 0,#14d014 35%,#30e830 60%,#00a000 100%);border-radius:50% 50% 46% 46%"></div>
<div class="ball" style="left:489px;top:639px;height:26px;background:radial-gradient(ellipse at 50% 20%,#a0a0ff 0,#1818d8 35%,#3838f0 60%,#0000a8 100%);border-radius:50% 50% 46% 46%"></div>

<div class="cb" style="top:674px"></div>
<div style="left:498px;top:679px;width:17px;height:12px;background:#000;border:1px solid #aaa"></div>
<div class="ar" style="left:523px;top:681px"></div>
<div class="cb" style="top:708px"></div>
<div style="left:498px;top:713px;width:17px;height:12px;background:linear-gradient(#222,#ccc 60%,#444);border:1px solid #666"></div>
<div class="ar" style="left:523px;top:715px"></div>

<div style="left:489px;top:742px;width:29px;height:23px;background:linear-gradient(#2b62b8,#123c8c);border-radius:2px"></div>
<svg style="left:496px;top:746px" width="15" height="15" viewBox="0 0 15 15"><path d="M4 3A6 6 0 1 0 11 3M7.5 1V7" stroke="#fff" stroke-width="2" fill="none"/></svg>
<svg style="left:498px;top:781px" width="14" height="14"><path d="M7 0V14M0 7H14" stroke="#111" stroke-width="1.6"/></svg>

<svg style="left:460px;top:505px" width="5" height="42"><circle cx="2.2" cy="2" r="2" fill="#333"/><circle cx="2.2" cy="10" r="2" fill="#333"/><circle cx="2.2" cy="19" r="2" fill="#333"/><circle cx="2.2" cy="28" r="2" fill="#333"/><circle cx="2.2" cy="37" r="2" fill="#333"/></svg>

<!-- Preview -->
<div style="left:552px;top:66px;width:800px;height:581px;background:#000"></div>
<svg style="left:552px;top:66px" width="423" height="581" viewBox="552 66 423 581">
<defs>
<linearGradient id="band" gradientUnits="userSpaceOnUse" x1="0" y1="129" x2="0" y2="599">
<stop offset="0" stop-color="#282828"/><stop offset=".15" stop-color="#484848"/><stop offset=".29" stop-color="#6a6a6a"/><stop offset=".39" stop-color="#555"/><stop offset=".47" stop-color="#585858"/><stop offset=".53" stop-color="#747474"/><stop offset=".58" stop-color="#6e6e6e"/><stop offset=".66" stop-color="#505050"/><stop offset=".78" stop-color="#585858"/><stop offset=".9" stop-color="#424242"/><stop offset="1" stop-color="#242424"/>
</linearGradient>
<filter id="bl" x="-20%" y="-20%" width="140%" height="140%"><feGaussianBlur stdDeviation="16"/></filter>
<filter id="nz" x="0" y="0" width="100%" height="100%"><feTurbulence type="fractalNoise" baseFrequency=".85" numOctaves="2" seed="4"/><feColorMatrix values="2.6 0 0 0 -.35  2.6 0 0 0 -.35  2.6 0 0 0 -.35  0 0 0 0 1"/></filter>
</defs>
<ellipse cx="985" cy="364" rx="275" ry="224" fill="url(#band)" filter="url(#bl)"/>
<rect x="552" y="66" width="423" height="581" filter="url(#nz)" style="mix-blend-mode:multiply"/>
</svg>
<span class="m" style="left:564px;top:71px;color:#6a8cff">0/185 72%</span>
<span class="m" style="left:564px;top:89px;color:#22e822">0/184 72%</span>
<span class="m" style="left:564px;top:108px;color:#f01414">0/173 67%</span>
<div style="left:552px;top:647px;width:423px;height:6px;background:#7f9ff8"></div>
<div style="left:552px;top:653px;width:423px;height:7px;background:#36f036"></div>
<div style="left:552px;top:660px;width:423px;height:5px;background:#f0382f"></div>
<div class="tk" style="left:632px"></div><div class="tk" style="left:712px"></div><div class="tk" style="left:792px"></div><div class="tk" style="left:872px"></div><div class="tk" style="left:952px"></div>
<span class="m" style="left:626px;top:647px;color:#111">10</span>
<span class="m" style="left:706px;top:647px;color:#111">20</span>
<span class="m" style="left:786px;top:647px;color:#111">30</span>
<span class="m" style="left:866px;top:647px;color:#111">40</span>
<span class="m" style="left:946px;top:647px;color:#111">50</span>

<!-- Dialog -->
<div style="left:1352px;top:66px;width:386px;height:21px;background:linear-gradient(#e4e8ec 70%,#ced2d6)"></div>
<div style="left:975px;top:87px;width:763px;height:892px;background:#e4e8ec;border-top:1px solid #888;border-left:1px solid #777;border-bottom:1px solid #8a8a8a;box-sizing:border-box;box-shadow:0 2px 5px rgba(0,0,0,.25)"></div>
<div style="left:976px;top:88px;width:762px;height:37px;background:#fff"></div>
<div style="left:986px;top:98px;width:16px;height:17px;border-radius:50%;background:radial-gradient(#f08a20 30%,#f8bc1a 65%,#fdd825)"></div>
<span style="left:1009px;top:98px;color:#a6a6a6">Paramètres: Histogramme</span>
<span style="left:981px;top:137px">Recherche:</span>
<div style="left:1067px;top:131px;width:201px;height:28px;background:#ebeff3;border:1px solid #666;border-bottom-color:#aaa;border-right-color:#aaa;box-sizing:border-box"></div>

<!-- tree scrollbars -->
<div style="left:1257px;top:166px;width:18px;height:771px;background:#d6dade"></div>
<div style="left:976px;top:919px;width:299px;height:18px;background:#d6dade"></div>
<div style="left:1260px;top:168px;width:12px;height:569px;background:#e4e8ec;border:1px solid #666;border-right:2px solid #95999e;border-radius:6px;box-sizing:border-box"></div>
<div style="left:977px;top:922px;width:216px;height:12px;background:#e4e8ec;border:1px solid #666;border-bottom:2px solid #95999e;border-radius:6px;box-sizing:border-box"></div>

<!-- tree -->
<svg style="left:980px;top:176px" width="12" height="12" viewBox="0 0 12 12"><rect x=".5" y=".5" width="11" height="11" rx="2" fill="#ccc" stroke="#333"/><path d="M3 6H9" stroke="#111"/></svg><span style="left:997px;top:173px;font-weight:bold">Système</span>
<svg style="left:1020px;top:202px" width="20" height="20"><use href="#gear"/></svg><span style="left:1049px;top:202px">Général</span>
<svg style="left:1021px;top:233px" width="18" height="18"><use href="#lay"/></svg><span style="left:1049px;top:233px">Disposition</span>
<div class="wh" style="left:1021px;top:263px;width:18px;height:18px"></div><span style="left:1049px;top:263px">Filtres</span>
<svg style="left:1020px;top:291px" width="20" height="20"><use href="#plan"/></svg><span style="left:1049px;top:293px">Profils</span>
<svg style="left:1020px;top:321px" width="20" height="20"><use href="#kb"/></svg><span style="left:1049px;top:323px">Raccourcis</span>
<svg style="left:1020px;top:351px" width="20" height="20"><use href="#log"/></svg><span style="left:1049px;top:353px">Log</span>

<svg style="left:980px;top:386px" width="12" height="12" viewBox="0 0 12 12"><rect x=".5" y=".5" width="11" height="11" rx="2" fill="#ccc" stroke="#333"/><path d="M3 6H9" stroke="#111"/></svg><span style="left:997px;top:383px;font-weight:bold">Capture</span>
<svg style="left:1020px;top:411px" width="20" height="20"><use href="#par"/></svg><span style="left:1049px;top:413px">Paramètres</span>
<svg style="left:1020px;top:441px" width="20" height="20"><use href="#fil"/></svg><span style="left:1049px;top:443px">Fichier log</span>
<div style="left:1020px;top:476px;width:20px;height:11px;background:#000"></div><span style="left:1021px;top:472px;font:bold 8px/18px 'Liberation Mono',monospace;color:#fff">AVI</span><span style="left:1049px;top:473px">AVI</span>
<svg style="left:1020px;top:501px" width="20" height="20"><use href="#buoy"/></svg><span style="left:1049px;top:503px">Capture d'urgence</span>

<svg style="left:980px;top:535px" width="12" height="12" viewBox="0 0 12 12"><rect x=".5" y=".5" width="11" height="11" rx="2" fill="#ccc" stroke="#333"/><path d="M3 6H9" stroke="#111"/></svg><span style="left:997px;top:533px;font-weight:bold">Matériel</span>
<svg style="left:1021px;top:561px" width="20" height="20"><use href="#indi"/></svg><span style="left:1054px;top:562px">Serveur INDI</span>
<svg style="left:1020px;top:591px" width="20" height="21"><use href="#tele"/></svg><span style="left:1049px;top:592px">Télescope</span>
<svg style="left:1020px;top:621px" width="20" height="20"><use href="#foc"/></svg><span style="left:1049px;top:622px">Système de mise au point</span>
<svg style="left:1020px;top:651px" width="20" height="20"><use href="#rot"/></svg><span style="left:1049px;top:653px">Rotateur</span>
<svg style="left:1020px;top:681px" width="20" height="20"><use href="#rou"/></svg><span style="left:1049px;top:683px">Roue à filtres motorisée</span>
<svg style="left:1020px;top:711px" width="20" height="20"><use href="#auto"/></svg><span style="left:1049px;top:713px">Autoguidage</span>

<svg style="left:980px;top:745px" width="12" height="12" viewBox="0 0 12 12"><rect x=".5" y=".5" width="11" height="11" rx="2" fill="#ccc" stroke="#333"/><path d="M3 6H9" stroke="#111"/></svg><span style="left:997px;top:743px;font-weight:bold">Prévisualisation</span>
<svg style="left:1020px;top:771px" width="20" height="20"><use href="#mon"/></svg><span style="left:1049px;top:773px">Affichage</span>
<svg style="left:1020px;top:801px" width="20" height="20"><use href="#hist"/></svg><span style="left:1049px;top:803px;font-weight:bold;font-style:italic;color:#b40c0c">Histogramme</span>

<svg style="left:980px;top:834px" width="12" height="12" viewBox="0 0 12 12"><rect x=".5" y=".5" width="11" height="11" rx="2" fill="#ccc" stroke="#333"/><path d="M3 6H9" stroke="#111"/></svg><span style="left:997px;top:833px;font-weight:bold">Image</span>
<svg style="left:1020px;top:861px" width="20" height="20"><use href="#dem"/></svg><span style="left:1049px;top:863px">Dématriçage</span>
<svg style="left:1020px;top:891px" width="20" height="20"><use href="#star"/></svg><span style="left:1049px;top:893px">Pixel chaud</span>

<!-- right settings -->
<span style="left:1300px;top:156px">Taux de rafraîchissement</span>
<div class="b" style="left:1510px;top:149px;width:100px;height:29px;line-height:27px">2 im/s</div>
<span style="left:1300px;top:193px">Mode de l'histogramme:</span>
<div class="b" style="left:1510px;top:187px;width:100px;height:29px;line-height:27px;text-align:left;padding-left:6px">4x4</div>
<svg style="left:1592px;top:196px" width="13" height="10"><path d="M1 1L6.5 7L12 1" stroke="#111" stroke-width="2" fill="none"/></svg>
<span style="left:1300px;top:229px">Style d'affichage</span>
<div class="r" style="left:1513px;top:229px"></div><span style="left:1534px;top:229px">Log étendu</span>
<div class="r on" style="left:1624px;top:229px"></div><span style="left:1644px;top:229px">Barre horizontale</span>

<div class="ck" style="top:264px"></div><svg style="left:1306px;top:266px" width="12" height="12"><path d="M1 6L5 10L11 2" stroke="#555" stroke-width="2" fill="none"/></svg><span style="left:1327px;top:264px">Calculer l'histogramme&nbsp; dans un processus séparé</span>
<div class="ck" style="top:299px"></div><svg style="left:1306px;top:301px" width="12" height="12"><path d="M1 6L5 10L11 2" stroke="#555" stroke-width="2" fill="none"/></svg><span style="left:1327px;top:299px">Afficher l'histogramme dans la fenêtre de prévisualisation</span>
<div class="ck" style="top:336px"></div><span style="left:1327px;top:335px">Afficher l'estimateur de bruit d'E. Kraaikamp (N&amp;B)</span>
<div class="ck" style="top:372px"></div><svg style="left:1306px;top:374px" width="12" height="12"><path d="M1 6L5 10L11 2" stroke="#555" stroke-width="2" fill="none"/></svg><span style="left:1327px;top:372px">Show pixel value and position in separate line below histogram</span>
<div class="ck" style="top:407px"></div><span style="left:1327px;top:407px">Afficher l'histogramme quand la capture est terminée</span>
<div class="ck" style="top:442px"></div><span style="left:1327px;top:442px">Masquer l'histogramme quand la capture commence</span>

<svg style="left:1300px;top:504px;opacity:.75" width="20" height="20"><use href="#rgb"/></svg>
<span style="left:1326px;top:506px;font-weight:bold;font-style:italic">Caméra couleur uniquement</span>
<div class="ck" style="top:538px"></div><span style="left:1327px;top:538px">Afficher le centre de luminosité de chaque couleur (caméra couleur)</span>
<div class="ck" style="top:573px"></div><span style="left:1327px;top:573px">Afficher l'aide au réglage de l'ADC dans l'histogramme</span>
<div class="ck" style="top:608px"></div><svg style="left:1306px;top:610px" width="12" height="12"><path d="M1 6L5 10L11 2" stroke="#555" stroke-width="2" fill="none"/></svg><span style="left:1327px;top:608px">Afficher l'histogramme de chaque couleur (caméra couleur)</span>
<span style="left:1324px;top:643px">Style d'affichage couleurs</span>
<div class="r" style="left:1513px;top:644px"></div><span style="left:1534px;top:643px">Empilées</span>
<div class="r on" style="left:1624px;top:644px"></div><span style="left:1644px;top:643px">Séparées</span>

<svg style="left:1299px;top:943px" width="28" height="28" viewBox="0 0 28 28"><circle cx="14" cy="14" r="14" fill="#1f6fd6"/><path d="M5 8Q10 6 14 9Q18 6 23 8V21Q18 19 14 21Q10 19 5 21Z" fill="#fff"/><path d="M14 9V21" stroke="#1f6fd6" stroke-width="1.5"/><path d="M8 10V19M20 10V19" stroke="#1f6fd6"/></svg>
<span style="left:1332px;top:949px;font-weight:bold;color:#a3a0f2">En savoir plus sur cette fonctionnalité</span>

<!-- annotations -->
<svg style="left:0;top:0" width="1738" height="1013" fill="none" stroke="#6a0fc9" stroke-width="3.6" stroke-linecap="round" stroke-linejoin="round">
<path d="M68 891C50 888 30 893 15 902C5 910 1 922 6 927C14 933 40 932 67 933C80 934 90 924 93 914C95 906 92 899 86 896"/>
<path d="M1049 792C1030 793 1012 793 1005 797C996 803 991 815 989 822C996 829 1025 832 1066 831"/>
<path d="M1645 218C1632 218 1622 219 1617 224C1612 229 1613 237 1618 243C1622 248 1624 253 1630 254C1637 254 1645 253 1653 253"/>
<path d="M1319 292C1308 293 1298 294 1292 298C1286 303 1284 311 1286 318C1289 324 1293 327 1298 327L1309 326"/>
</svg>
</div></body></html>
